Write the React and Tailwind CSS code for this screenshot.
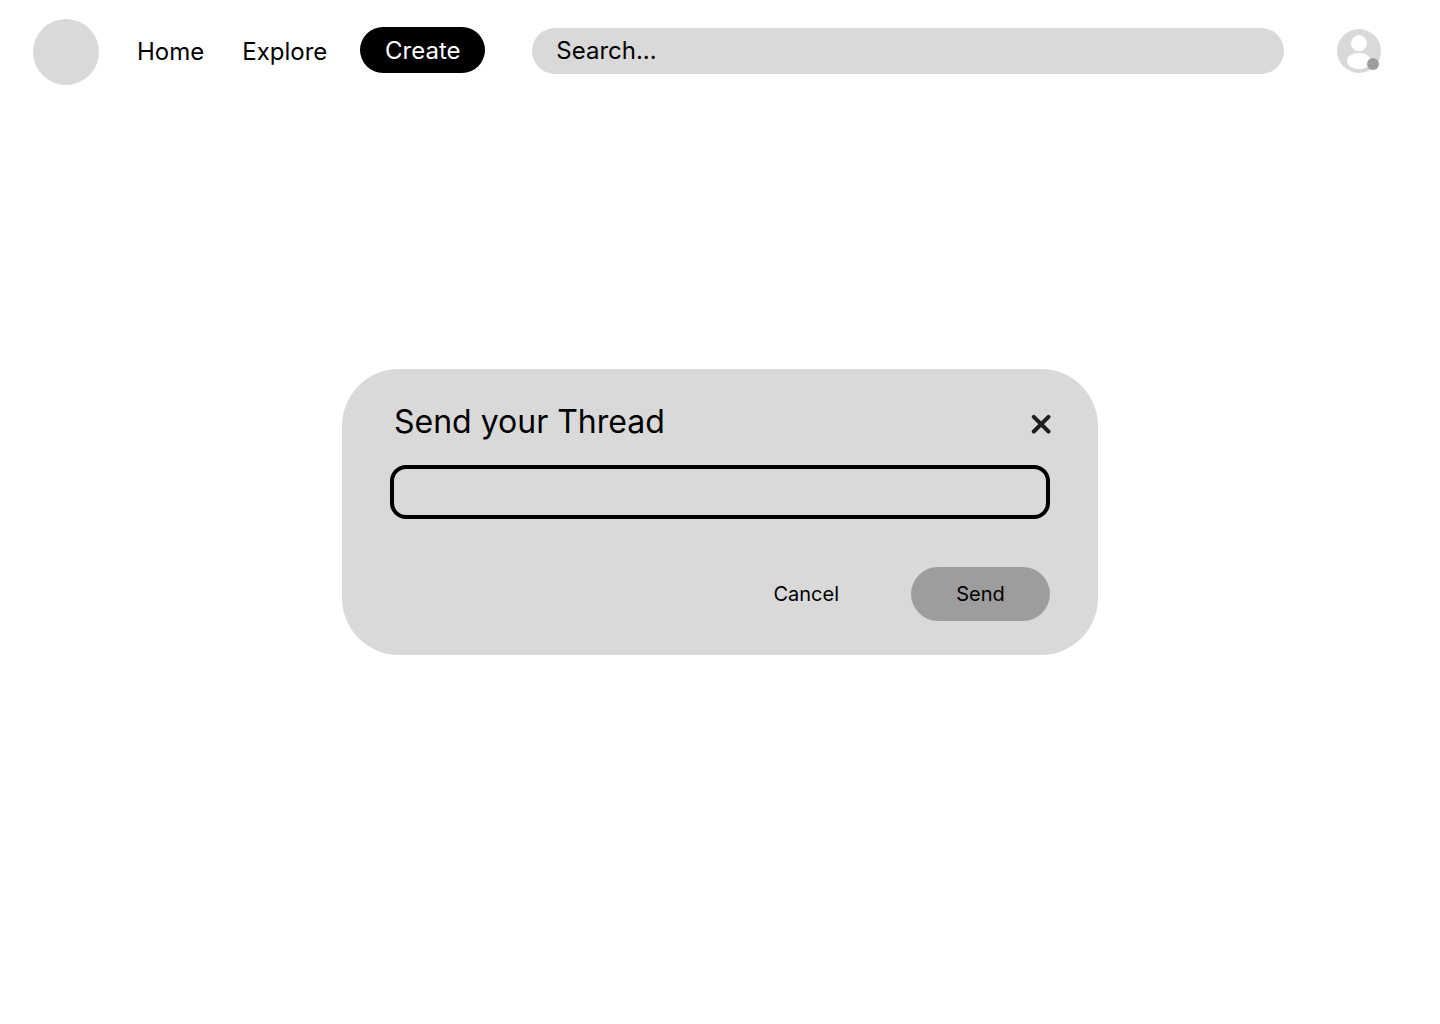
export default function App() {
  return (
    <div className="flex min-h-screen flex-col bg-white font-['Inter',sans-serif] text-2xl text-black">
      <header className="flex items-center pt-[19px] pb-4 pl-[33px] pr-[59px]">
        <a href="#" aria-label="Logo" className="size-[66px] shrink-0 rounded-full bg-[#d9d9d9]" />
        <nav className="ml-[38px] flex items-center">
          <a href="#">Home</a>
          <a href="#" className="ml-[38px]">Explore</a>
          <button type="button" className="mb-1 ml-[33px] h-[46px] w-[125px] rounded-full bg-black pt-0.5 text-white">
            Create
          </button>
        </nav>
        <input
          type="search"
          aria-label="Search"
          placeholder="Search..."
          className="mb-0.5 ml-[47px] h-[46px] min-w-0 flex-1 rounded-full bg-[#d9d9d9] px-6 pb-0.5 outline-none placeholder:text-black"
        />
        <button type="button" aria-label="Account" className="mb-0.5 ml-[53px] size-11 shrink-0">
          <svg viewBox="0 0 44 44" className="size-11">
            <circle cx="22" cy="22" r="22" fill="#d9d9d9" />
            <circle cx="22" cy="14.3" r="8" fill="#fff" />
            <ellipse cx="22" cy="32" rx="12" ry="8" fill="#fff" />
            <circle cx="36" cy="35" r="6" fill="#9d9d9d" />
          </svg>
        </button>
      </header>
      <main className="flex flex-1 flex-col items-center px-6 pt-[268px]">
        <form
          role="dialog"
          aria-labelledby="title"
          onSubmit={(e) => e.preventDefault()}
          className="w-full max-w-[756px] rounded-[57px] bg-[#d9d9d9] px-12 pt-[33px] pb-[34px]"
        >
          <div className="flex items-center justify-between pl-1">
            <h1 id="title" className="text-[32px] leading-10">Send your Thread</h1>
            <button type="button" aria-label="Close" className="-mr-px mt-1">
              <svg viewBox="0 0 20 20" className="size-5" stroke="#1e1e1e" strokeWidth="4" strokeLinecap="round">
                <path d="M2.8 2.8 17.5 17.5M17.5 2.8 2.8 17.5" />
              </svg>
            </button>
          </div>
          <input
            type="text"
            aria-labelledby="title"
            className="mt-[23px] block h-[54px] w-full rounded-2xl border-4 border-black bg-transparent px-4 outline-none"
          />
          <div className="mt-12 flex items-center justify-end gap-[72px] text-xl">
            <button type="button">Cancel</button>
            <button type="submit" className="h-[54px] w-[139px] rounded-full bg-[#9d9d9d]">Send</button>
          </div>
        </form>
      </main>
    </div>
  );
}
